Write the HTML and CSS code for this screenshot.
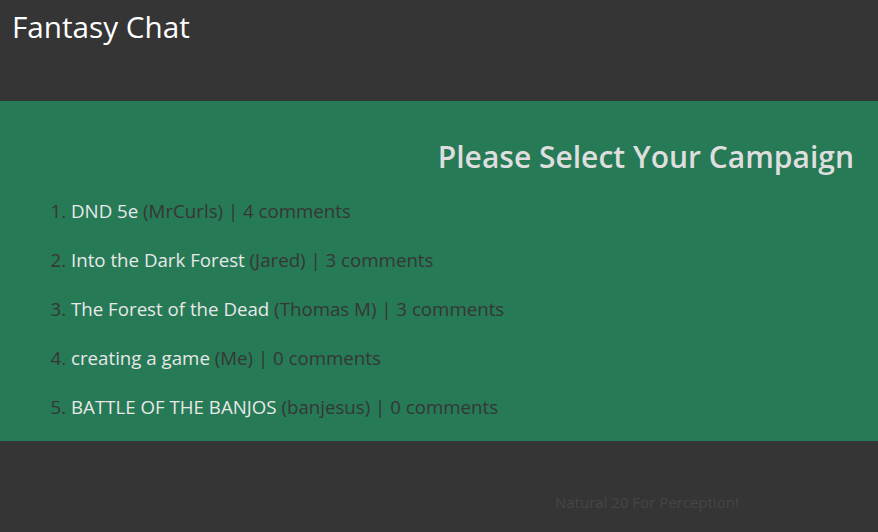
FILE: index.html
```html
<!DOCTYPE html>
<html>
<head>
<meta charset="utf-8">
<link rel="stylesheet" href="styles.css">
</head>
<body>
<header class="top">
  <h1 class="brand">Fantasy Chat</h1>
</header>
<main class="panel">
  <h2 class="panel-title">Please Select Your Campaign</h2>
  <ol class="campaigns">
    <li><span class="name">DND 5e</span> (MrCurls) | 4 comments</li>
    <li><span class="name">Into the Dark Forest</span> (Jared) | 3 comments</li>
    <li><span class="name">The Forest of the Dead</span> (Thomas M) | 3 comments</li>
    <li><span class="name">creating a game</span> (Me) | 0 comments</li>
    <li><span class="name">BATTLE OF THE BANJOS</span> (banjesus) | 0 comments</li>
  </ol>
</main>
<footer class="bottom">
  <p class="tagline">Natural 20 For Perception!</p>
</footer>
</body>
</html>
```

FILE: styles.css
```css
html, body {
  margin: 0;
  padding: 0;
  background: #353535;
  font-family: "Open Sans", "Noto Sans", sans-serif;
}
.top {
  height: 101px;
  box-sizing: border-box;
  padding: 6px 12px 0;
}
.brand {
  margin: 0;
  font-size: 29.7px;
  font-weight: 400;
  line-height: 42px;
  color: #ffffff;
}
.panel {
  background: #267a56;
  height: 340px;
  box-sizing: border-box;
  padding: 35px 24px 0 0;
}
.panel-title {
  margin: 0;
  text-align: right;
  font-size: 30px;
  font-weight: 600;
  line-height: 42px;
  color: #dedede;
}
.campaigns {
  margin: 20px 0 0;
  padding-left: 71px;
  color: #363636;
  font-size: 18.7px;
}
.campaigns li {
  line-height: 26px;
  margin-bottom: 23px;
}
.campaigns .name {
  color: #e8e8e8;
}
.bottom {
  display: flex;
  justify-content: flex-start;
  padding-left: 555px;
}
.tagline {
  margin: 51px 0 0;
  font-size: 15px;
  line-height: 20px;
  color: #464646;
}
```
